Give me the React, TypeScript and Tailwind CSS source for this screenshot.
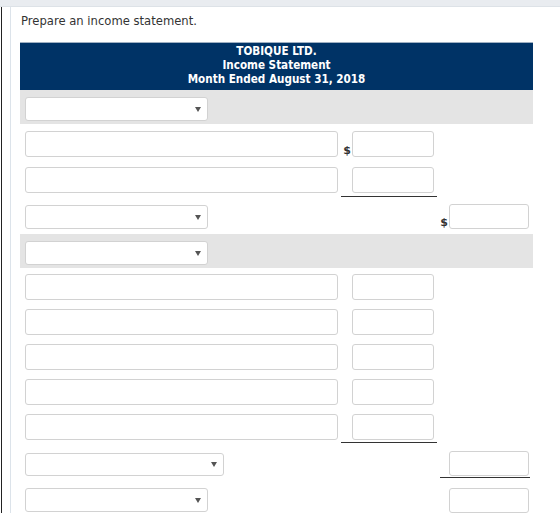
import React from "react";

const Arrow = () => (
  <svg width="6" height="5" viewBox="0 0 6 5" className="block">
    <path d="M0 0 H6 L3 5 Z" fill="#555" />
  </svg>
);

const Select = ({ w, h = 24 }: { w: string; h?: number }) => (
  <div
    className={`${w} ${h === 24 ? "h-[24px]" : "h-[23px]"} bg-white border border-[#d2d2d2] rounded-[3px] flex items-center justify-end pr-[6px]`}
  >
    <Arrow />
  </div>
);

const TextInput = () => (
  <div className="w-[313px] h-[26px] bg-white border border-[#d2d2d2] rounded-[3px]" />
);

const NumInput = ({ w = "w-[82px]", h = "h-[26px]" }: { w?: string; h?: string }) => (
  <div className={`${w} ${h} bg-white border border-[#d2d2d2] rounded-[3px]`} />
);

const Dollar = () => (
  <span className="text-[11px] leading-[11px] font-bold text-[#333] mb-[1px] mr-[1px] font-['DejaVu_Sans',sans-serif]">
    $
  </span>
);

export default function App() {
  return (
    <div className="w-[560px] h-[513px] bg-white overflow-hidden font-['DejaVu_Sans','Liberation_Sans',sans-serif]">
      <div className="h-[7px] bg-[#e9ecf0] border-b border-[#dde2e7]" />
      <div className="flex h-[506px]">
        <div className="w-[1px]" />
        <div className="w-[1px] bg-[#222]" />
        <div className="w-[8px]" />
        <div className="w-[1px] bg-[#dce3ea]" />
        <div className="flex-1 pl-[9px]">
          <div className="mt-[6px] mb-[13px] pl-[1px] text-[11.6px] leading-[16px] text-[#333]">
            Prepare an income statement.
          </div>
          <div className="w-[513px]">
            {/* Header */}
            <div className="h-[48px] bg-[#003366] border-t border-[#9fb0c2] pt-[1px] text-white text-center font-bold text-[11.6px] leading-[14px] font-['DejaVu_Sans_Condensed','DejaVu_Sans',sans-serif]">
              <div>TOBIQUE LTD.</div>
              <div>Income Statement</div>
              <div>Month Ended August 31, 2018</div>
            </div>
            {/* Band 1 */}
            <div className="h-[34px] bg-[#e4e4e4] pl-[5px] pt-[7px]">
              <Select w="w-[183px]" />
            </div>
            {/* Row A */}
            <div className="h-[35px] pt-[7px] grid grid-cols-[321px_96px_96px] items-start">
              <div className="pl-[5px]"><TextInput /></div>
              <div className="flex justify-end items-end pr-[3px]"><Dollar /><NumInput /></div>
              <div />
            </div>
            {/* Row B */}
            <div className="h-[39px] pt-[8px] grid grid-cols-[321px_96px_96px] items-start">
              <div className="pl-[5px]"><TextInput /></div>
              <div className="flex justify-end pr-[3px] pb-[3px] border-b border-[#333]"><NumInput /></div>
              <div />
            </div>
            {/* Row C */}
            <div className="h-[36px] pt-[6px] grid grid-cols-[321px_96px_96px] items-start">
              <div className="pl-[5px] pt-[1px]"><Select w="w-[183px]" /></div>
              <div />
              <div className="flex justify-end items-end pr-[4px]"><Dollar /><NumInput w="w-[80px]" h="h-[25px]" /></div>
            </div>
            {/* Band 2 */}
            <div className="h-[34px] bg-[#e4e4e4] pl-[5px] pt-[7px]">
              <Select w="w-[183px]" />
            </div>
            {/* D rows */}
            {[0, 1, 2, 3].map((i) => (
              <div key={i} className="h-[35px] pt-[6px] grid grid-cols-[321px_96px_96px] items-start">
                <div className="pl-[5px]"><TextInput /></div>
                <div className="flex justify-end pr-[3px]"><NumInput /></div>
                <div />
              </div>
            ))}
            <div className="h-[36px] pt-[6px] grid grid-cols-[321px_96px_96px] items-start">
              <div className="pl-[5px]"><TextInput /></div>
              <div className="flex justify-end pr-[3px] pb-[2px] border-b border-[#333]"><NumInput /></div>
              <div />
            </div>
            {/* Row E */}
            <div className="h-[34px] pt-[7px] grid grid-cols-[321px_96px_96px] items-start">
              <div className="pl-[5px] pt-[2px]"><Select w="w-[199px]" h={23} /></div>
              <div />
              <div className="ml-[3px] mr-[3px] flex justify-end pr-[1px] pb-[1px] border-b border-[#333]"><NumInput w="w-[80px]" h="h-[25px]" /></div>
            </div>
            {/* Row F */}
            <div className="h-[40px] pt-[10px] grid grid-cols-[321px_96px_96px] items-start">
              <div className="pl-[5px]"><Select w="w-[183px]" /></div>
              <div />
              <div className="flex justify-end pr-[4px]"><NumInput w="w-[80px]" h="h-[25px]" /></div>
            </div>
          </div>
        </div>
      </div>
    </div>
  );
}
